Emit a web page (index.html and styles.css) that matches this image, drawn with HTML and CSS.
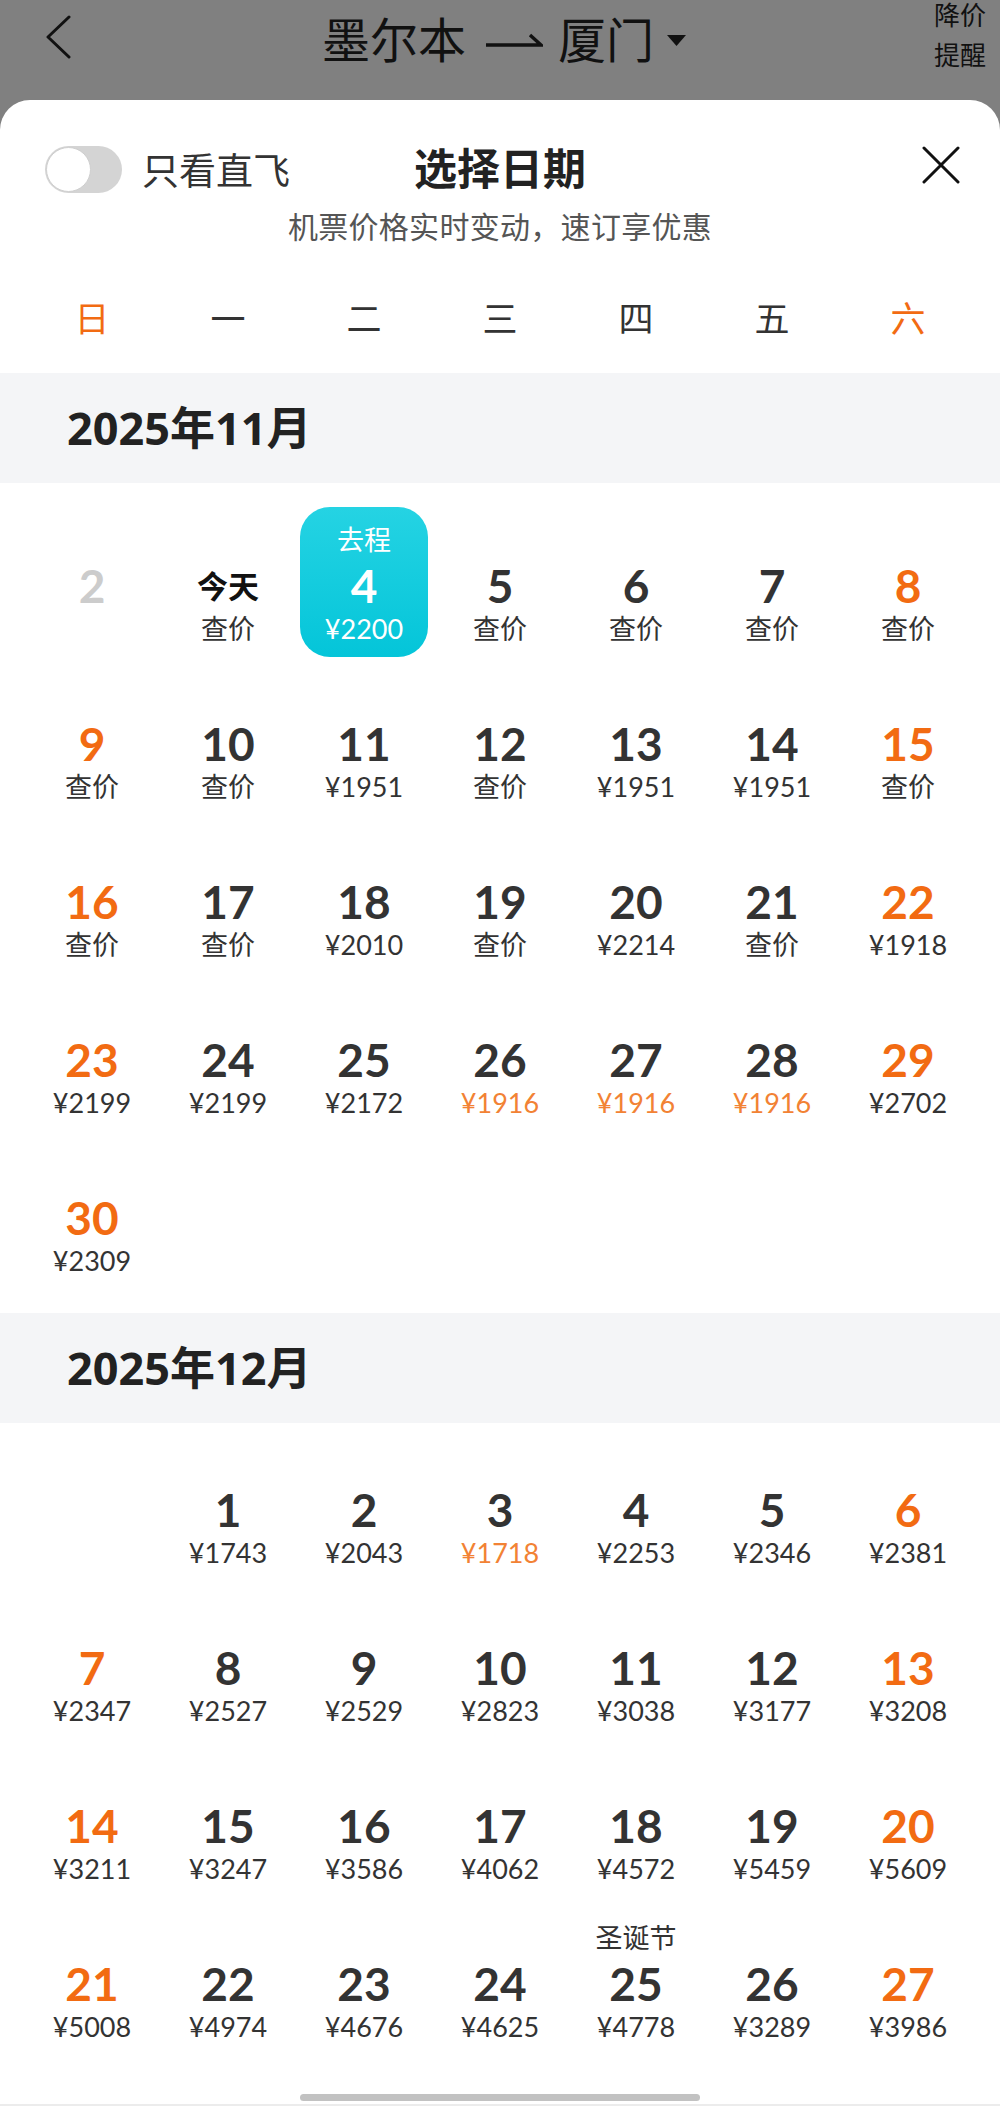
FILE: index.html
```html
<!DOCTYPE html>
<html>
<head>
    <title>选择日期</title>
    <link rel="stylesheet" href="styles.css">
</head>
<body>
    <div class="topbar">
        <div class="back">
            <svg width="26" height="44" viewBox="0 0 26 44"><polyline points="23,2 2,22 23,42" fill="none" stroke="#111" stroke-width="3" stroke-linecap="round" stroke-linejoin="round"/></svg>
        </div>
        <div class="route">
            <span>墨尔本</span>
            <svg class="arrow" width="58" height="20" viewBox="0 0 58 20"><path d="M1 15 H56 L45 5" fill="none" stroke="#111" stroke-width="3.4" stroke-linejoin="miter"/></svg>
            <span>厦门</span>
            <svg class="caret" width="19" height="11" viewBox="0 0 19 11"><polygon points="0,0 19,0 9.5,11" fill="#111"/></svg>
        </div>
        <div class="remind">降价<br>提醒</div>
    </div>

    <div class="sheet">
        <div class="sheet-top">
            <div class="direct">
                <span class="switch"></span>
                <span class="direct-label">只看直飞</span>
            </div>
            <div class="sheet-title">选择日期</div>
            <div class="close">
                <svg width="38" height="38" viewBox="0 0 38 38"><path d="M2 2 L36 36 M36 2 L2 36" stroke="#111" stroke-width="3" stroke-linecap="round"/></svg>
            </div>
        </div>
        <div class="subtitle">机票价格实时变动，速订享优惠</div>

        <div class="weekdays">
            <span class="weekend">日</span>
            <span>一</span>
            <span>二</span>
            <span>三</span>
            <span>四</span>
            <span>五</span>
            <span class="weekend">六</span>
        </div>

        <div class="month-title">2025年11月</div>
        <div class="days days-first">
            <div class="day past"><span class="tag"></span><span class="num">2</span><span class="price"></span></div>
            <div class="day"><span class="tag"></span><span class="num today">今天</span><span class="price">查价</span></div>
            <div class="day selected"><span class="tag">去程</span><span class="num">4</span><span class="price">¥2200</span></div>
            <div class="day"><span class="tag"></span><span class="num">5</span><span class="price">查价</span></div>
            <div class="day"><span class="tag"></span><span class="num">6</span><span class="price">查价</span></div>
            <div class="day"><span class="tag"></span><span class="num">7</span><span class="price">查价</span></div>
            <div class="day weekend"><span class="tag"></span><span class="num">8</span><span class="price">查价</span></div>

            <div class="day weekend"><span class="tag"></span><span class="num">9</span><span class="price">查价</span></div>
            <div class="day"><span class="tag"></span><span class="num">10</span><span class="price">查价</span></div>
            <div class="day"><span class="tag"></span><span class="num">11</span><span class="price">¥1951</span></div>
            <div class="day"><span class="tag"></span><span class="num">12</span><span class="price">查价</span></div>
            <div class="day"><span class="tag"></span><span class="num">13</span><span class="price">¥1951</span></div>
            <div class="day"><span class="tag"></span><span class="num">14</span><span class="price">¥1951</span></div>
            <div class="day weekend"><span class="tag"></span><span class="num">15</span><span class="price">查价</span></div>

            <div class="day weekend"><span class="tag"></span><span class="num">16</span><span class="price">查价</span></div>
            <div class="day"><span class="tag"></span><span class="num">17</span><span class="price">查价</span></div>
            <div class="day"><span class="tag"></span><span class="num">18</span><span class="price">¥2010</span></div>
            <div class="day"><span class="tag"></span><span class="num">19</span><span class="price">查价</span></div>
            <div class="day"><span class="tag"></span><span class="num">20</span><span class="price">¥2214</span></div>
            <div class="day"><span class="tag"></span><span class="num">21</span><span class="price">查价</span></div>
            <div class="day weekend"><span class="tag"></span><span class="num">22</span><span class="price">¥1918</span></div>

            <div class="day weekend"><span class="tag"></span><span class="num">23</span><span class="price">¥2199</span></div>
            <div class="day"><span class="tag"></span><span class="num">24</span><span class="price">¥2199</span></div>
            <div class="day"><span class="tag"></span><span class="num">25</span><span class="price">¥2172</span></div>
            <div class="day"><span class="tag"></span><span class="num">26</span><span class="price low">¥1916</span></div>
            <div class="day"><span class="tag"></span><span class="num">27</span><span class="price low">¥1916</span></div>
            <div class="day"><span class="tag"></span><span class="num">28</span><span class="price low">¥1916</span></div>
            <div class="day weekend"><span class="tag"></span><span class="num">29</span><span class="price">¥2702</span></div>

            <div class="day weekend"><span class="tag"></span><span class="num">30</span><span class="price">¥2309</span></div>
        </div>

        <div class="month-title">2025年12月</div>
        <div class="days">
            <div class="day empty"></div>
            <div class="day"><span class="tag"></span><span class="num">1</span><span class="price">¥1743</span></div>
            <div class="day"><span class="tag"></span><span class="num">2</span><span class="price">¥2043</span></div>
            <div class="day"><span class="tag"></span><span class="num">3</span><span class="price low">¥1718</span></div>
            <div class="day"><span class="tag"></span><span class="num">4</span><span class="price">¥2253</span></div>
            <div class="day"><span class="tag"></span><span class="num">5</span><span class="price">¥2346</span></div>
            <div class="day weekend"><span class="tag"></span><span class="num">6</span><span class="price">¥2381</span></div>

            <div class="day weekend"><span class="tag"></span><span class="num">7</span><span class="price">¥2347</span></div>
            <div class="day"><span class="tag"></span><span class="num">8</span><span class="price">¥2527</span></div>
            <div class="day"><span class="tag"></span><span class="num">9</span><span class="price">¥2529</span></div>
            <div class="day"><span class="tag"></span><span class="num">10</span><span class="price">¥2823</span></div>
            <div class="day"><span class="tag"></span><span class="num">11</span><span class="price">¥3038</span></div>
            <div class="day"><span class="tag"></span><span class="num">12</span><span class="price">¥3177</span></div>
            <div class="day weekend"><span class="tag"></span><span class="num">13</span><span class="price">¥3208</span></div>

            <div class="day weekend"><span class="tag"></span><span class="num">14</span><span class="price">¥3211</span></div>
            <div class="day"><span class="tag"></span><span class="num">15</span><span class="price">¥3247</span></div>
            <div class="day"><span class="tag"></span><span class="num">16</span><span class="price">¥3586</span></div>
            <div class="day"><span class="tag"></span><span class="num">17</span><span class="price">¥4062</span></div>
            <div class="day"><span class="tag"></span><span class="num">18</span><span class="price">¥4572</span></div>
            <div class="day"><span class="tag"></span><span class="num">19</span><span class="price">¥5459</span></div>
            <div class="day weekend"><span class="tag"></span><span class="num">20</span><span class="price">¥5609</span></div>

            <div class="day weekend"><span class="tag"></span><span class="num">21</span><span class="price">¥5008</span></div>
            <div class="day"><span class="tag"></span><span class="num">22</span><span class="price">¥4974</span></div>
            <div class="day"><span class="tag"></span><span class="num">23</span><span class="price">¥4676</span></div>
            <div class="day"><span class="tag"></span><span class="num">24</span><span class="price">¥4625</span></div>
            <div class="day"><span class="tag">圣诞节</span><span class="num">25</span><span class="price">¥4778</span></div>
            <div class="day"><span class="tag"></span><span class="num">26</span><span class="price">¥3289</span></div>
            <div class="day weekend"><span class="tag"></span><span class="num">27</span><span class="price">¥3986</span></div>
        </div>
    </div>

    <div class="home-bar"><span></span></div>
</body>
</html>
```

FILE: styles.css
```css
body {
    margin: 0;
    width: 1000px;
    height: 2106px;
    overflow: hidden;
    position: relative;
    background-color: #808080;
    font-family: "Noto Sans", "Noto Sans CJK SC", sans-serif;
    color: #333;
}

/* dimmed page behind the sheet */
.topbar {
    height: 100px;
    display: grid;
    grid-template-columns: 1fr auto 1fr;
    align-items: start;
    color: #111;
}

.back {
    padding: 15px 0 0 46px;
}

.route {
    display: flex;
    align-items: center;
    margin: 10px 0 0 8px;
    font-size: 48px;
    line-height: 60px;
}

.route .arrow {
    margin: 0 15px 0 19px;
}

.route .caret {
    margin-left: 13px;
}

.remind {
    justify-self: end;
    padding-right: 14px;
    margin-top: -5px;
    font-size: 26px;
    line-height: 40px;
}

/* date sheet */
.sheet {
    height: 2006px;
    background-color: #fff;
    border-radius: 30px 30px 0 0;
}

.sheet-top {
    display: grid;
    grid-template-columns: 1fr auto 1fr;
    align-items: center;
    height: 54px;
    padding-top: 42px;
}

.direct {
    display: flex;
    align-items: center;
    padding-left: 45px;
}

.switch {
    position: relative;
    width: 77px;
    height: 47px;
    border-radius: 24px;
    background-color: #d4d4d4;
}

.switch::after {
    content: "";
    position: absolute;
    left: 1px;
    top: 1px;
    width: 43px;
    height: 43px;
    border-radius: 50%;
    background-color: #fff;
    border: 1px solid #cfcfcf;
}

.direct-label {
    margin-left: 20px;
    font-size: 37px;
    color: #333;
}

.sheet-title {
    font-size: 43px;
    font-weight: bold;
    line-height: 54px;
    color: #222;
}

.close {
    justify-self: end;
    padding: 0 40px 8px 0;
    line-height: 0;
}

.subtitle {
    margin-top: 11px;
    text-align: center;
    font-size: 30px;
    letter-spacing: 0.3px;
    line-height: 40px;
    color: #555;
}

.weekdays {
    display: grid;
    grid-template-columns: repeat(7, 136px);
    padding: 0 24px 22px;
    margin-top: 40px;
    height: 64px;
    line-height: 64px;
    text-align: center;
    font-size: 35px;
    color: #333;
}

.weekdays .weekend {
    color: #f26b12;
}

.month-title {
    height: 110px;
    line-height: 110px;
    padding-left: 67px;
    background-color: #f4f5f7;
    font-size: 45px;
    font-weight: bold;
    color: #222;
}

.days {
    display: grid;
    grid-template-columns: repeat(7, 136px);
    grid-auto-rows: 158px;
    padding: 4px 24px 0;
}

.days-first {
    padding: 20px 24px;
}

.day {
    box-sizing: border-box;
    height: 158px;
    border: 4px solid transparent;
    border-radius: 34px;
    background-clip: padding-box;
    display: flex;
    flex-direction: column;
    align-items: center;
    color: #333;
}

.day .tag {
    height: 30px;
    margin-top: 18px;
    font-size: 27px;
    line-height: 30px;
    white-space: nowrap;
}

.day .num {
    margin-top: 4px;
    height: 54px;
    font-family: Lato, "Noto Sans", "Noto Sans CJK SC", sans-serif;
    font-size: 46px;
    font-weight: bold;
    line-height: 54px;
    color: #333;
}

.day .num.today {
    font-family: "Noto Sans", "Noto Sans CJK SC", sans-serif;
    font-size: 31px;
    color: #111;
}

.day .price {
    height: 32px;
    font-family: Lato, "Noto Sans", "Noto Sans CJK SC", sans-serif;
    font-size: 27px;
    line-height: 32px;
    color: #333;
    white-space: nowrap;
}

.day.weekend .num {
    color: #f26b12;
}

.day .price.low {
    color: #f28234;
}

.day.past .num {
    color: #cccccc;
}

.day.selected {
    background-image: linear-gradient(180deg, #25d3e3, #04c5d9);
}

.day.selected .tag,
.day.selected .num,
.day.selected .price {
    color: #fff;
}

.home-bar {
    position: absolute;
    left: 0;
    right: 0;
    bottom: 0;
    height: 10px;
    display: flex;
    justify-content: center;
    border-bottom: 2px solid #ececec;
}

.home-bar span {
    width: 400px;
    height: 7px;
    border-radius: 4px;
    background-color: #c2c2c2;
}
```
